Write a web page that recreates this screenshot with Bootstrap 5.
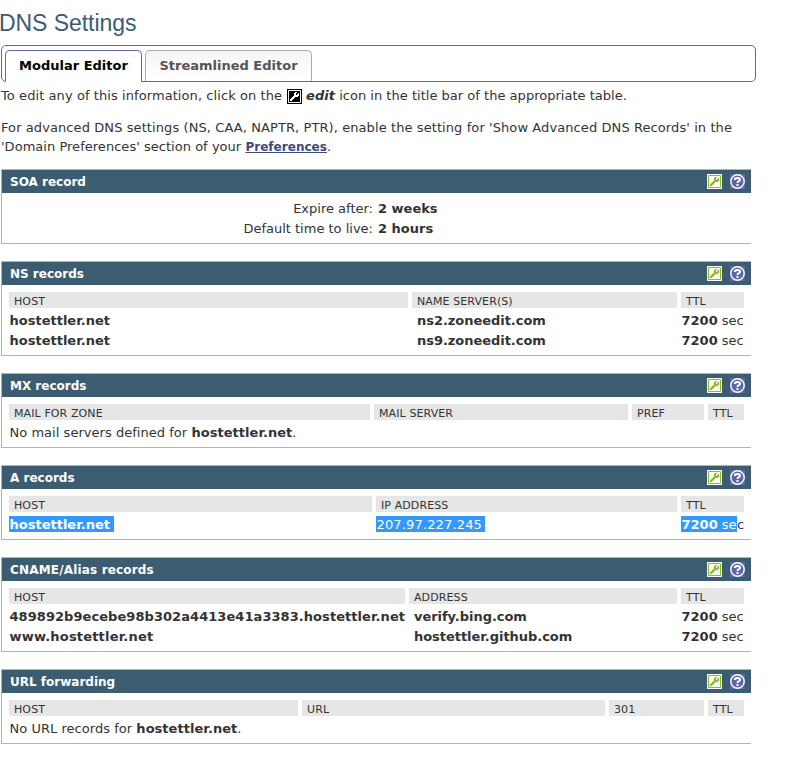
<!DOCTYPE html>
<html lang="en">
<head>
<meta charset="utf-8">
<meta name="viewport" content="width=device-width, initial-scale=1">
<title>DNS Settings</title>
<link href="https://cdn.jsdelivr.net/npm/bootstrap@5.3.0/dist/css/bootstrap.min.css" rel="stylesheet">
<style>
body{font:13px/20px Verdana,"DejaVu Sans",sans-serif;color:#333;background:#fff;overflow:hidden}
b{font-weight:700}
.page-title{font:400 23px/28px Arial,"Liberation Sans",sans-serif;color:#3c5c71;padding-top:9px;height:45px;letter-spacing:-.06px;text-indent:-1px}
.tabbar{width:755px;height:37px;margin-left:1px;padding:4px 3px 0;border:1px solid #6069a6;border-radius:5px}
.tabbar .tab{height:31px;border:1px solid #aaa;border-bottom:0;border-radius:5px 5px 0 0;line-height:29px;font-weight:700;color:#555;text-align:center;background:linear-gradient(#f5f5f5,#fff);white-space:nowrap;margin-right:3px;width:167px}
.tabbar .tab.active{height:32px;width:137px;border-color:#6069a6;background:#fff;color:#000}
.intro{padding-left:1px;line-height:19px;white-space:nowrap}
.intro a{color:#3b4a7d;font-weight:700}
.how-to{padding-top:4px}
.lead-in{letter-spacing:.078px}
.lead-out{letter-spacing:.02px}
.edit-inline{margin:3px 4px 0 5px}
.adv{padding-top:13px;height:64px;letter-spacing:.088px}
.adv .second{letter-spacing:.03px}
.adv a{font-size:12px;letter-spacing:.03px}
.panel{width:750px;margin:0 0 17px 1px;border:1px solid #aab2cc;border-right:0}
.panel-head{height:23px;background:#3c5c71;color:#fff;font-size:12px;font-weight:700;padding:0 6px 0 8px}
.wide{letter-spacing:.17px}
.panel-body{padding:7px 7px 5px;white-space:nowrap}
.panel-body.soa{padding-top:6px;padding-bottom:4px}
.records{display:grid;column-gap:4px}
.records>*{height:20px;line-height:22px;padding-left:.5px}
.records>.th{height:16px;line-height:19px;margin-bottom:2px;background:#e6e6e6;font-size:11px;padding-left:5px;letter-spacing:.1px}
.ns{grid-template-columns:399px 265px 63px}
.mx{grid-template-columns:361px 254px 72px 36px}
.arec{grid-template-columns:363px 301px 63px}
.cname{grid-template-columns:396px 268px 63px}
.url{grid-template-columns:289px 303px 95px 36px}
.records>.full{grid-column:1/-1;letter-spacing:.035px}
.records>.ind{padding-left:5px;letter-spacing:-.04px}
.records>.long{letter-spacing:.058px}
.records>.www{letter-spacing:.18px}
.records>.picked{padding-left:0}
.selected{display:inline-block;height:16px;line-height:18px;background:#3399ff;color:#fff;vertical-align:top;margin-top:2px;padding-left:.5px}
.sel-host{width:105px}
.sel-ip{width:109px;letter-spacing:.15px}
.sel-ttl{width:56px}
.soa-row{display:grid;grid-template-columns:364px 1fr;column-gap:5px}
</style>
<script src="https://cdn.jsdelivr.net/npm/bootstrap@5.3.0/dist/js/bootstrap.bundle.min.js"></script>
</head>
<body>
<svg class="d-none">
<symbol id="wrench" viewBox="0 0 15 15"><path shape-rendering="crispEdges" d="M3 11h2v1H3zM3 10h3v1H3zM4 9h3v1H4zM5 8h3v1H5zM6 7h5v1H6zM7 6h5v1H7zM7 5h2v1H7zM7 4h2v1H7zM8 3h2v1H8zM11 4h1v2h-1zM10 5h1v1h-1z"/></symbol>
<symbol id="edit" viewBox="0 0 15 15"><path fill="#fff" d="M0 0h15v15H0z"/><path fill="none" stroke="#8cba2b" d="M1.5 1.5h12v12h-12z"/><use href="#wrench" fill="#8cba2b"/></symbol>
<symbol id="help" viewBox="0 0 15 15"><path fill="#5d68a5" d="M0 0h15v15H0z"/><circle cx="7.5" cy="7.5" r="6.7" fill="none" stroke="#fff" stroke-width="1.4"/><path fill="none" stroke="#fff" stroke-width="2" d="M4.9 6V5.4Q5 4 7.5 4T10 5.7Q10 6.8 8.4 7.4Q7.5 7.8 7.5 9.1"/><path fill="#fff" d="M6.5 10h2v2h-2z"/></symbol>
</svg>
<h1 class="page-title m-0">DNS Settings</h1>
<div class="tabbar d-flex"><div class="tab active">Modular Editor</div><div class="tab">Streamlined Editor</div></div>
<div class="intro">
<p class="how-to d-flex mb-0"><span class="lead-in">To edit any of this information, click on the</span><svg class="edit-inline" width="15" height="15" viewBox="0 0 15 15"><path d="M0 0h15v15H0z"/><path fill="none" stroke="#fff" d="M1.5 1.5h12v12h-12z"/><use href="#wrench" fill="#fff"/></svg><span class="lead-out"><b><i>edit</i></b> icon in the title bar of the appropriate table.</span></p>
<p class="adv mb-0">For advanced DNS settings (NS, CAA, NAPTR, PTR), enable the setting for 'Show Advanced DNS Records' in the<br><span class="second">'Domain Preferences' section of your <a href="#">Preferences</a>.</span></p>
</div>
<section class="panel">
<div class="panel-head d-flex align-items-center"><span class="me-auto">SOA record</span><svg class="me-2" width="15" height="15"><use href="#edit"/></svg><svg width="15" height="15"><use href="#help"/></svg></div>
<div class="panel-body soa"><div class="soa-row"><span class="text-end">Expire after:</span><b>2 weeks</b></div><div class="soa-row"><span class="text-end">Default time to live:</span><b>2 hours</b></div></div>
</section>
<section class="panel">
<div class="panel-head d-flex align-items-center"><span class="me-auto">NS records</span><svg class="me-2" width="15" height="15"><use href="#edit"/></svg><svg width="15" height="15"><use href="#help"/></svg></div>
<div class="panel-body"><div class="records ns"><span class="th">HOST</span><span class="th">NAME SERVER(S)</span><span class="th">TTL</span>
<b>hostettler.net</b><b class="ind">ns2.zoneedit.com</b><span><b>7200</b> sec</span>
<b>hostettler.net</b><b class="ind">ns9.zoneedit.com</b><span><b>7200</b> sec</span></div></div>
</section>
<section class="panel">
<div class="panel-head d-flex align-items-center"><span class="me-auto">MX records</span><svg class="me-2" width="15" height="15"><use href="#edit"/></svg><svg width="15" height="15"><use href="#help"/></svg></div>
<div class="panel-body"><div class="records mx"><span class="th">MAIL FOR ZONE</span><span class="th">MAIL SERVER</span><span class="th">PREF</span><span class="th">TTL</span>
<span class="full">No mail servers defined for <b>hostettler.net</b>.</span></div></div>
</section>
<section class="panel">
<div class="panel-head d-flex align-items-center"><span class="me-auto">A records</span><svg class="me-2" width="15" height="15"><use href="#edit"/></svg><svg width="15" height="15"><use href="#help"/></svg></div>
<div class="panel-body"><div class="records arec"><span class="th">HOST</span><span class="th">IP ADDRESS</span><span class="th">TTL</span>
<span class="picked"><b class="selected sel-host">hostettler.net</b></span><span class="picked"><span class="selected sel-ip">207.97.227.245</span></span><span class="picked"><span class="selected sel-ttl"><b>7200</b> se</span>c</span></div></div>
</section>
<section class="panel">
<div class="panel-head d-flex align-items-center"><span class="me-auto wide">CNAME/Alias records</span><svg class="me-2" width="15" height="15"><use href="#edit"/></svg><svg width="15" height="15"><use href="#help"/></svg></div>
<div class="panel-body"><div class="records cname"><span class="th">HOST</span><span class="th">ADDRESS</span><span class="th">TTL</span>
<b class="long">489892b9ecebe98b302a4413e41a3383.hostettler.net</b><b class="ind">verify.bing.com</b><span><b>7200</b> sec</span>
<b class="www">www.hostettler.net</b><b class="ind">hostettler.github.com</b><span><b>7200</b> sec</span></div></div>
</section>
<section class="panel">
<div class="panel-head d-flex align-items-center"><span class="me-auto">URL forwarding</span><svg class="me-2" width="15" height="15"><use href="#edit"/></svg><svg width="15" height="15"><use href="#help"/></svg></div>
<div class="panel-body"><div class="records url"><span class="th">HOST</span><span class="th">URL</span><span class="th">301</span><span class="th">TTL</span>
<span class="full">No URL records for <b>hostettler.net</b>.</span></div></div>
</section>
</body>
</html>
